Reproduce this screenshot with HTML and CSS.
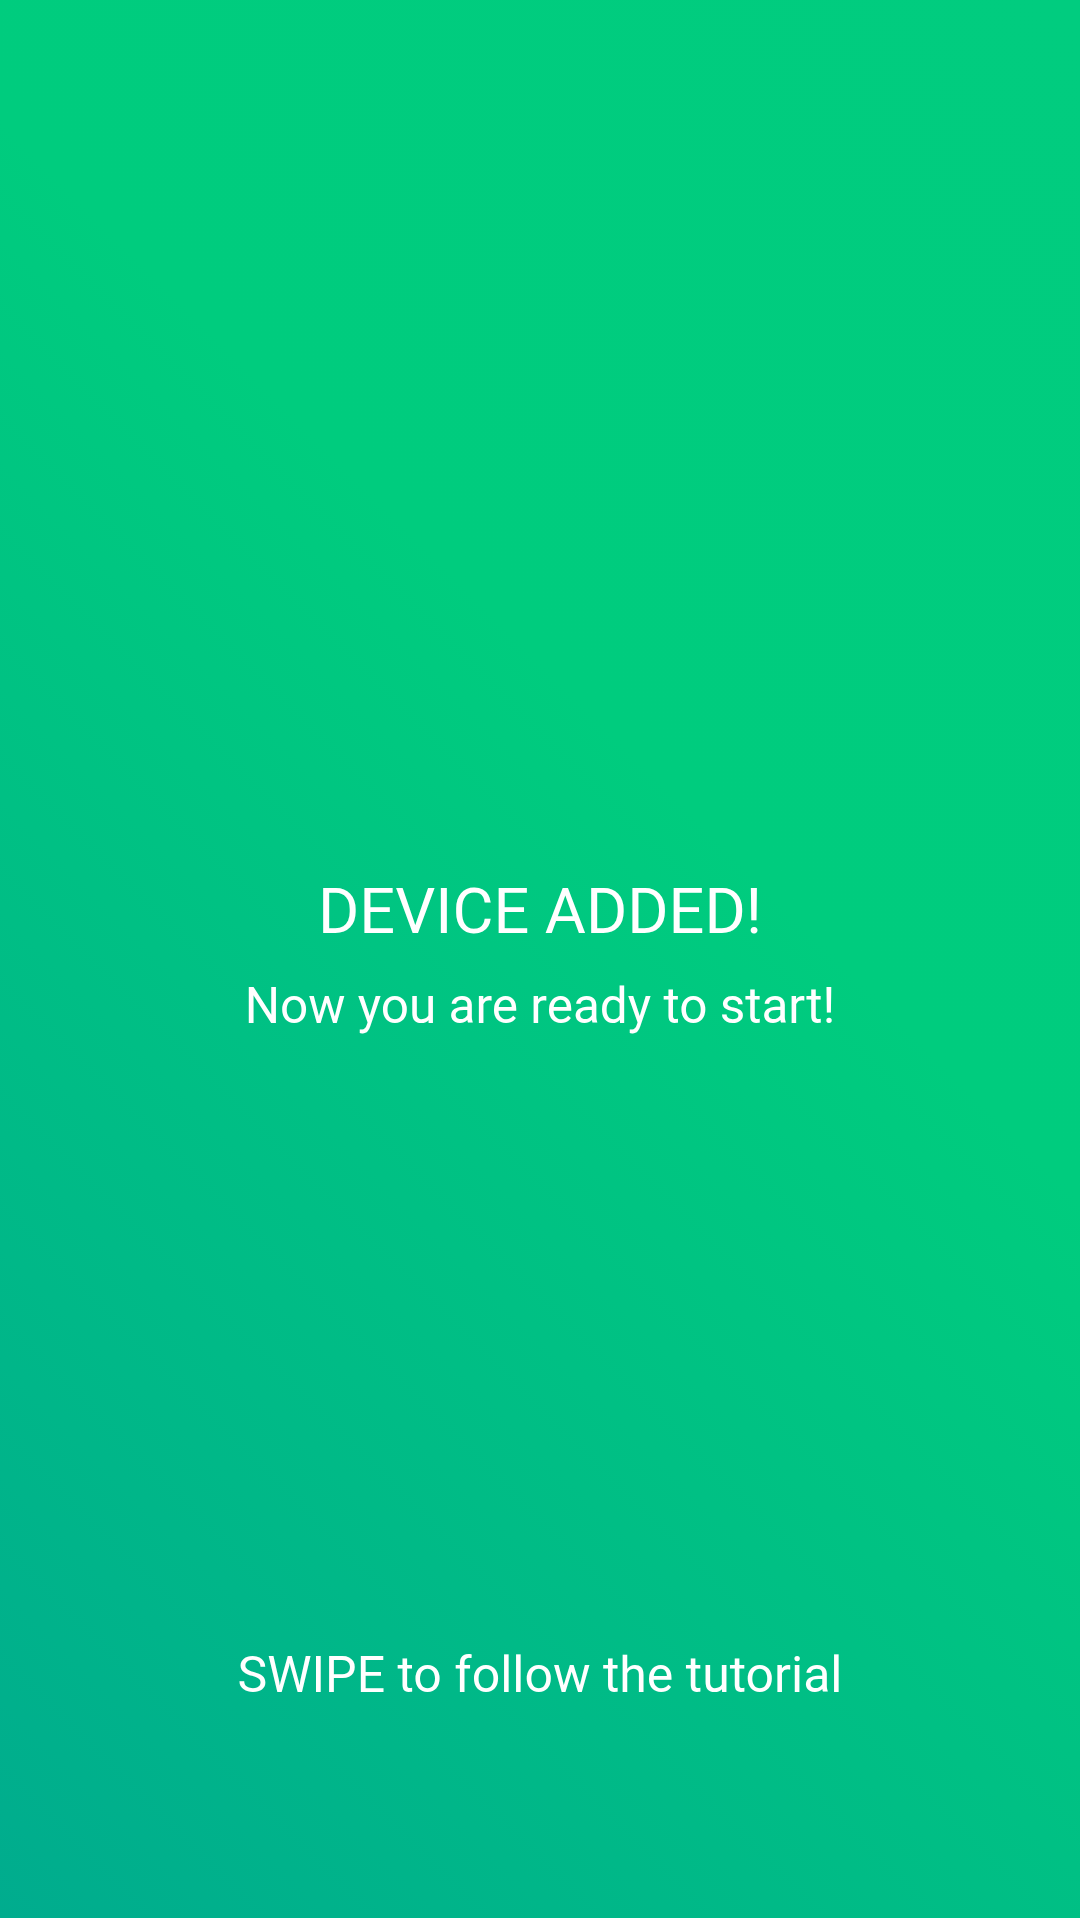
FILE: index.html
```html
<!DOCTYPE html>
<html lang="en">
<head>
<meta charset="utf-8">
<title>Device added</title>
<link rel="stylesheet" href="styles.css">
</head>
<body>
<div class="screen">
  <main class="center">
    <h1 class="title">DEVICE ADDED!</h1>
    <p class="subtitle">Now you are ready to start!</p>
  </main>
  <footer class="footer">
    <p class="hint">SWIPE to follow the tutorial</p>
  </footer>
</div>
</body>
</html>
```
FILE: styles.css
```css
html, body {
  margin: 0;
  padding: 0;
}
body {
  width: 1080px;
  height: 1918px;
  overflow: hidden;
  font-family: Roboto, "Noto Sans", "Liberation Sans", sans-serif;
  color: #ffffff;
}
.screen {
  width: 1080px;
  height: 1918px;
  display: flex;
  flex-direction: column;
  background: linear-gradient(45deg, #00ac8e 0%, #00cc7e 60%, #01cc7f 100%);
}
.center {
  flex: 1;
  display: flex;
  flex-direction: column;
  align-items: center;
  justify-content: center;
  padding-top: 264px;
}
.title {
  margin: 0;
  font-weight: 400;
  font-size: 63px;
  line-height: 76px;
}
.subtitle {
  margin: 27px 0 0;
  font-weight: 400;
  font-size: 49.5px;
  line-height: 58px;
}
.footer {
  display: flex;
  justify-content: center;
  padding-bottom: 213px;
}
.hint {
  margin: 0;
  font-weight: 400;
  font-size: 50px;
  line-height: 60px;
}
```
